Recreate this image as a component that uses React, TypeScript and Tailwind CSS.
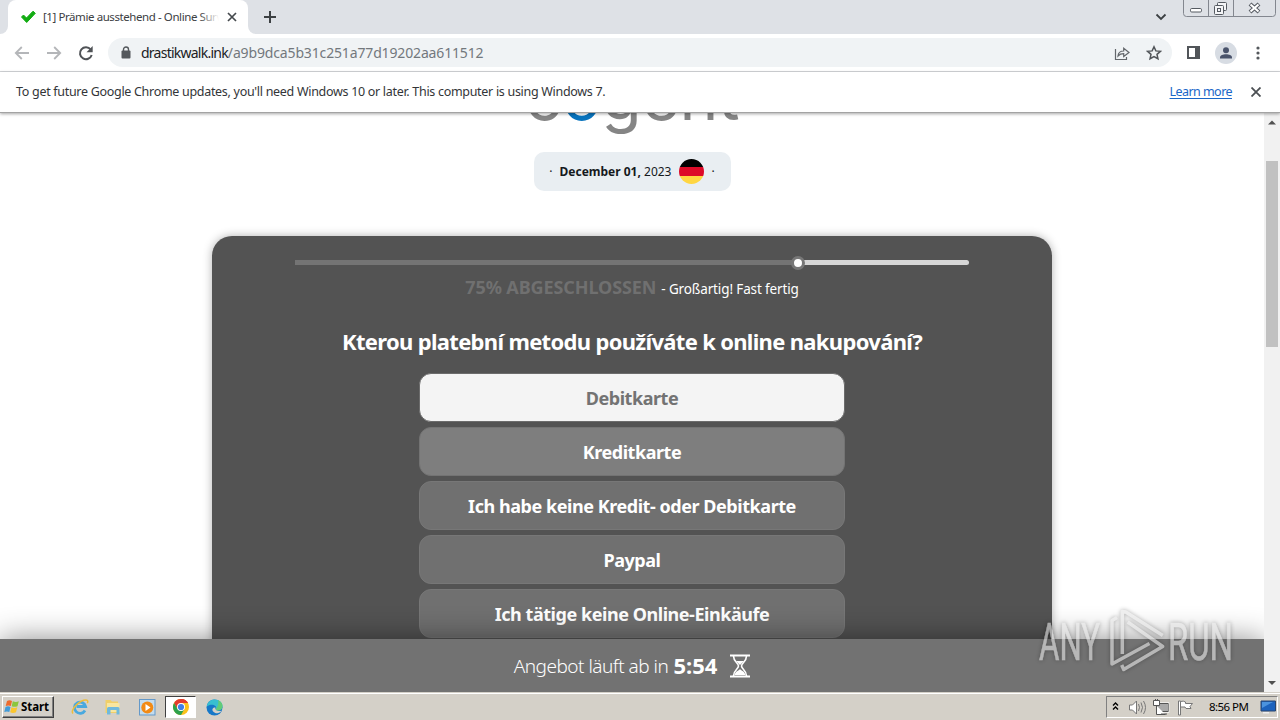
import clsx from 'clsx'

const OPTIONS = [
  { label: 'Debitkarte', state: 'active' },
  { label: 'Kreditkarte', state: 'hover' },
  { label: 'Ich habe keine Kredit- oder Debitkarte', state: 'idle' },
  { label: 'Paypal', state: 'idle' },
  { label: 'Ich tätige keine Online-Einkäufe', state: 'idle' },
]

const OPTION_STYLES = {
  active: 'bg-[#f4f4f4] text-[#737373] border-[#6c6c6c]',
  hover: 'bg-[#7e7e7e] text-white border-[#737373]',
  idle: 'bg-[#707070] text-white border-[#777777]',
}

function TabStrip() {
  return (
    <div className="flex h-[34px] shrink-0 justify-between bg-[#dee1e6]">
      <div className="flex">
        <div className="h-[34px] w-2 bg-white">
          <div className="h-full rounded-br-lg bg-[#dee1e6]" />
        </div>
        <div className="flex h-full w-[240px] items-center rounded-t-lg bg-white pl-[12px] pr-[9px]">
          <svg width="16" height="14" viewBox="0 0 16 14" className="shrink-0">
            <path d="M1.500 7l2-2 3 3L13 1.200l2.300 2.100L6.700 12.500z" fill="#12ac12" stroke="#12ac12" strokeLinejoin="round" />
          </svg>
          <div className="relative ml-[7px] w-[176px] overflow-hidden whitespace-nowrap text-[11.5px] tracking-[-0.42px] text-[#3c4043]">
            [1] Prämie ausstehend - Online Surv
            <div className="absolute inset-y-0 right-0 w-5 bg-gradient-to-r from-transparent to-white" />
          </div>
          <svg width="10" height="10" viewBox="0 0 10 10" className="ml-[8px] shrink-0" stroke="#45494d" strokeWidth="1.700">
            <path d="M1 1l8 8M9 1L1 9" />
          </svg>
        </div>
        <div className="h-[34px] w-2 bg-white">
          <div className="h-full rounded-bl-lg bg-[#dee1e6]" />
        </div>
        <svg width="14" height="34" viewBox="0 0 14 34" className="ml-[7px]" stroke="#3c4043" strokeWidth="2">
          <path d="M7 11v12M1 17h12" />
        </svg>
      </div>
      <div className="flex pr-[4px]">
        <svg width="12" height="34" viewBox="0 0 12 34" className="mr-[16px]" fill="none" stroke="#3c4043" strokeWidth="1.800">
          <path d="M1.500 14.500L6 19l4.500-4.500" />
        </svg>
        <svg width="93" height="18" viewBox="0 0 93 18" fill="none" stroke="#83878f">
          <path d="M.5 0v13.500q0 3 3 3h86q3 0 3-3V0M25.500 0v16M50.500 0v16" />
          <g stroke="#555a61">
            <rect x="7.500" y="8.500" width="11" height="3.500" rx="1.200" fill="#fff" />
            <rect x="34.500" y="2.500" width="9" height="8" rx="1" fill="#f4f5f7" />
            <rect x="31.500" y="5.500" width="9" height="9" rx="1" fill="#f4f5f7" />
            <rect x="34.500" y="8.500" width="3" height="3" />
          </g>
          <path d="M67 4l9 8M76 4l-9 8" stroke="#555a61" strokeWidth="4.200" />
          <path d="M67.500 4.500l8 7M75.500 4.500l-8 7" stroke="#fff" strokeWidth="2.200" />
        </svg>
      </div>
    </div>
  )
}

function Toolbar() {
  return (
    <div className="flex h-[38px] shrink-0 items-center border-b border-[#d5d7da] bg-white">
      <svg width="100" height="36" viewBox="0 0 100 36" fill="none" strokeWidth="1.800">
        <path d="M29 18H16M21.800 12l-6 6 6 6" stroke="#b4b6b9" />
        <path d="M47 18h13M54.200 12l6 6-6 6" stroke="#b4b6b9" />
        <path d="M90.700 14.500a6 6 0 1 0 1 5.500" stroke="#505357" strokeWidth="2" />
        <path d="M92.700 11v6.200h-6.200z" fill="#505357" />
      </svg>
      <div className="ml-2 flex h-[29px] w-[1064px] items-center rounded-full bg-[#f0f3f5] pl-[13px] pr-[10px]">
        <svg width="10" height="13" viewBox="0 0 10 13">
          <rect x=".5" y="4.500" width="9" height="8" rx="1" fill="#54585c" />
          <path d="M2.500 5V3.500a2.500 2.500 0 0 1 5 0V5" fill="none" stroke="#54585c" strokeWidth="1.400" />
        </svg>
        <div className="ml-[10px] flex-1 whitespace-nowrap text-[14px] tracking-[-0.15px] text-[#73787d]">
          <span className="tracking-[-0.76px] text-[#202124]">drastikwalk.ink</span>/a9b9dca5b31c251a77d19202aa611512
        </div>
        <svg width="16" height="16" viewBox="0 0 16 16" fill="none" stroke="#63676b" strokeWidth="1.200">
          <path d="M1.500 4v10.500h11V12" />
          <path d="M4 11c.3-3.500 2.300-5 5.700-5V3.200L15 7.500l-5.300 4V8.700C7.300 8.700 5.600 9.300 4 11z" />
        </svg>
        <svg width="16" height="16" viewBox="0 0 16 16" className="ml-4" fill="none" stroke="#515559" strokeWidth="1.500">
          <path d="M8 1.800l1.850 4.100 4.500.45-3.350 3 .95 4.400L8 11.500l-3.950 2.250.95-4.400-3.350-3 4.500-.45z" />
        </svg>
      </div>
      <svg width="15" height="15" viewBox="0 0 15 15" className="ml-[14px]" fill="none" stroke="#515559" strokeWidth="2">
        <path d="M2 2h11v11H2z" />
        <path d="M11 2v11" strokeWidth="4" />
      </svg>
      <svg width="22" height="22" viewBox="0 0 22 22" className="ml-[14px]">
        <circle cx="11" cy="11" r="11" fill="#d7dce3" />
        <circle cx="11" cy="8.300" r="3" fill="#49536b" />
        <path d="M5 16.500v-1.200c0-2 3-3.100 6-3.100s6 1.100 6 3.100v1.200z" fill="#49536b" />
      </svg>
      <svg width="4" height="14" viewBox="0 0 4 14" className="ml-[19px]" fill="#54585c">
        <circle cx="2" cy="2" r="1.600" />
        <circle cx="2" cy="7" r="1.600" />
        <circle cx="2" cy="12" r="1.600" />
      </svg>
    </div>
  )
}

function InfoBar() {
  return (
    <div className="relative z-10 flex h-[41px] shrink-0 items-center justify-between border-b border-[#a3a3a3] bg-white pl-4 pr-[19px] text-[12.5px] shadow-[0_1px_3px_rgba(0,0,0,0.35)]">
      <span className="whitespace-nowrap tracking-[-0.3px] text-[#333538]">
        To get future Google Chrome updates, you'll need Windows 10 or later. This computer is using Windows 7.
      </span>
      <div className="flex items-center">
        <span className="tracking-[-0.55px] text-[#1a66c8] underline underline-offset-2">Learn more</span>
        <svg width="10" height="10" viewBox="0 0 10 10" className="ml-[19px]" stroke="#4b4f53" strokeWidth="1.800">
          <path d="M.5.500l9 9M9.500.500l-9 9" />
        </svg>
      </div>
    </div>
  )
}

function GermanFlag() {
  return (
    <div className="flex h-[25px] w-[25px] flex-col overflow-hidden rounded-full">
      <div className="flex-1 bg-black" />
      <div className="flex-1 bg-[#dd0a28]" />
      <div className="flex-1 bg-[#ffd642]" />
    </div>
  )
}

function Survey() {
  return (
    <div className="mt-[45px] flex h-[500px] w-[840px] shrink-0 flex-col items-center rounded-[20px] bg-[#535353] pt-[24px] shadow-[0_0_10px_rgba(0,0,0,0.3)]">
      <div className="relative flex h-[5px] w-[674px] rounded-r-sm bg-[#d6d6d6]">
        <div className="h-full w-[504px] bg-[#747474]" />
        <div className="absolute -top-[4px] left-[496px] h-[14px] w-[14px] rounded-full border-[3px] border-[#777777] bg-white" />
      </div>
      <div className="mt-[9px] flex h-[28px] items-baseline gap-[5px] whitespace-nowrap">
        <span className="text-[18px] font-bold tracking-[-0.1px] text-[#707070]">75% ABGESCHLOSSEN</span>
        <span className="text-[13.500px] tracking-[-0.13px] text-white">- Großartig! Fast fertig</span>
      </div>
      <h1 className="mt-[23px] h-[32px] whitespace-nowrap text-[22px] font-bold leading-[32px] tracking-[-0.68px] text-white">
        Kterou platební metodu používáte k online nakupování?
      </h1>
      <div className="mt-[16px] flex w-[426px] flex-col gap-[5px]">
        {OPTIONS.map(option => (
          <button
            key={option.label}
            className={clsx(
              'flex h-[49px] items-center justify-center whitespace-nowrap rounded-[12px] border pt-[2px] text-[18px] font-bold tracking-[-0.45px]',
              OPTION_STYLES[option.state as keyof typeof OPTION_STYLES],
            )}
          >
            {option.label}
          </button>
        ))}
      </div>
    </div>
  )
}

function Scrollbar() {
  return (
    <div className="flex w-4 shrink-0 flex-col items-center bg-[#f1f1f1]">
      <svg width="16" height="48" viewBox="0 0 16 48" fill="#505050">
        <path d="M4 11.500h8L8 7.500z" />
      </svg>
      <div className="h-[186px] w-[12px] bg-[#c1c1c1]" />
      <div className="flex-1" />
      <svg width="16" height="17" viewBox="0 0 16 17" fill="#505050">
        <path d="M4 6h8l-4 4z" />
      </svg>
    </div>
  )
}

function Countdown() {
  return (
    <div className="relative z-10 flex h-[53px] shrink-0 items-center justify-center bg-[#727272] text-white shadow-[0_0_30px_rgba(0,0,0,0.45)]">
      <span className="whitespace-nowrap pt-px text-[19px] font-light tracking-[-0.5px]">Angebot läuft ab in</span>
      <span className="ml-[5px] text-[22px] font-bold">5:54</span>
      <svg width="20" height="24" viewBox="0 0 20 24" className="ml-[13px]" fill="none" stroke="#fff" strokeWidth="2">
        <path d="M0 1.500h20M0 22.500h20" />
        <path d="M3.500 2c0 6 5 7 5 10s-5 4-5 10M16.500 2c0 6-5 7-5 10s5 4 5 10" strokeWidth="1.600" />
        <path d="M6 7h8l-4 4zM4.500 21c1-4 4-4 5.500-6 1.500 2 4.500 2 5.500 6z" fill="#fff" stroke="none" />
      </svg>
    </div>
  )
}

function Watermark() {
  return (
    <svg width="200" height="74" viewBox="0 0 200 74" className="absolute left-[1035px] top-[604px] z-20 opacity-60 drop-shadow-[0_0_2px_rgba(0,0,0,0.5)]">
      <g fill="#e6e6e6" stroke="#e6e6e6" strokeWidth=".6" fontFamily="Roboto, sans-serif" fontSize="51">
        <text x="4" y="55.5" textLength="61" lengthAdjust="spacingAndGlyphs">ANY</text>
        <text x="133" y="55.5" textLength="65" lengthAdjust="spacingAndGlyphs">RUN</text>
      </g>
      <g fill="none" stroke="#e6e6e6" strokeWidth="3.500" strokeLinejoin="round">
        <path d="M82 13.500l-5 3v43.500l37.500-20.500" />
        <path d="M87.300 50V7.500l3.500.5 37 23.500" />
        <path d="M92.700 18l35 24.500-39 23-2-4.500" />
      </g>
    </svg>
  )
}

function StartIcon() {
  return (
    <svg width="16" height="16" viewBox="0 0 16 16">
      <path d="M3 2q2.500-1.500 5 0L6.800 7Q4.500 5.800 1.700 7z" fill="#ed6b2d" />
      <path d="M8.800 2.300q3 1.500 6 0L13.500 7.200q-3 1.300-5.800 0z" fill="#8cc63e" />
      <path d="M1.500 8q2.500-1.300 5 0l-1.200 5Q3 11.800.3 13z" fill="#429bd8" />
      <path d="M7.500 8.300q3 1.300 5.800 0L12 13.300q-3 1.300-5.800 0z" fill="#fbc62e" />
    </svg>
  )
}

function TaskbarIcons() {
  return (
    <div className="flex items-center">
      <svg width="18" height="18" viewBox="0 0 18 18" className="ml-[17px]" fill="none">
        <path d="M14 12.500a5.600 5.600 0 1 1 .6-4H5.500" stroke="#49a9df" strokeWidth="2.800" />
        <path d="M2 15.500C-1.500 12 9.500 1 16 2.200c1 .3 1 1.800.3 3" stroke="#edbd3c" strokeWidth="1.500" />
      </svg>
      <svg width="18" height="18" viewBox="0 0 18 18" className="ml-[15px]">
        <path d="M1.500 2h5l1.500 1.500h6V15h-12.500z" fill="#f0cf69" />
        <path d="M3 5h12.500v9H3z" fill="#f8e69f" />
        <path d="M3 16.500V10.500q0-1.500 1.500-1.500h9.500q1.500 0 1.500 1.500v6h-3V12h-6v4.500z" fill="#70b9dc" />
      </svg>
      <svg width="17" height="17" viewBox="0 0 17 17" className="ml-[17px]">
        <rect x=".5" y=".5" width="15.500" height="15.500" fill="#c4dced" stroke="#6499c9" />
        <circle cx="8.300" cy="8.500" r="6" fill="#f28a14" />
        <path d="M6.500 5l5 3.500-5 3.500z" fill="#fff" />
      </svg>
      <div className="ml-[9px] flex h-[22px] w-[31px] items-center justify-center border border-b-white border-l-[#404040] border-r-white border-t-[#404040] bg-white">
        <svg width="16" height="16" viewBox="0 0 16 16">
          <circle cx="8" cy="8" r="8" fill="#fbc11b" />
          <path d="M8 8V0a8 8 0 0 1 6.930 4H8z" fill="#e33b2e" />
          <path d="M8 4L4.540 10 1.070 4A8 8 0 0 1 14.930 4z" fill="#e33b2e" />
          <path d="M1.070 4A8 8 0 0 0 8 16l3.460-6-6.920 0z" fill="#2da14c" />
          <circle cx="8" cy="8" r="4" fill="#fff" />
          <circle cx="8" cy="8" r="3.100" fill="#3f7fe8" />
        </svg>
      </div>
      <svg width="17" height="17" viewBox="0 0 17 17" className="ml-[10px]">
        <circle cx="8.500" cy="8.500" r="8" fill="#1678c8" />
        <path d="M.7 7.500C1.500 3 4.800.5 8.700.5c4.500 0 7.800 3 7.800 6.500 0 3-2.200 4.500-4.500 4.500-2 0-2.700-.7-2-1.700 1.500-3-4.500-6-9.300-2.300z" fill="#38bfd0" />
        <path d="M12 1.200c3 1.200 4.500 3.500 4.500 5.800 0 3-2.200 4.500-4.500 4.500-2 0-2.700-.7-2-1.700C12 7 13 4 12 1.200z" fill="#62cb78" />
        <path d="M9.500 8.500c-.8 2.500 2.500 4.500 6.200 3-2 3.300-5.700 3.500-8 1.500-2.500-2.200-1-5 1.800-4.500z" fill="#d4d0c8" />
      </svg>
    </div>
  )
}

function Taskbar() {
  return (
    <div className="flex h-[28px] shrink-0 items-center justify-between border-t border-[#d4d0c8] bg-[#d4d0c8] shadow-[inset_0_1px_0_#ffffff]">
      <div className="flex h-full items-center pt-px">
        <div className="ml-[2px] flex h-[22px] w-[52px] items-center border border-b-[#404040] border-l-white border-r-[#404040] border-t-white pl-px shadow-[inset_-1px_-1px_0_#808080]">
          <StartIcon />
          <span className="ml-px text-[11.500px] font-bold tracking-[-0.1px] text-black">Start</span>
        </div>
        <TaskbarIcons />
      </div>
      <div className="mr-[2px] mt-px flex h-[22px] w-[172px] items-center border border-b-white border-l-[#808080] border-r-white border-t-[#808080]">
        <svg width="95" height="20" viewBox="0 0 95 20" fill="none">
          <path d="M6 8.500l2.500-2.500L11 8.500M6 12.500L8.500 10l2.500 2.500" stroke="#000" strokeWidth="1.400" />
          <path d="M22.500 8h3l4-4v13l-4-4h-3z" fill="#fff" stroke="#777" />
          <path d="M31.500 7q2 3.500 0 7M34 5.500q3 5 0 10M36.500 4q4 6.500 0 13" stroke="#777" />
          <path d="M50.500 6.500h11v8h-11z" fill="#a9a9a9" stroke="#555" />
          <path d="M50 5.500h12v10H50z" stroke="#fff" strokeWidth=".6" />
          <path d="M46.500 3.500h6v5h-6zM48.500 2v2M50.500 2v2M49.500 8.500v9h9M54 17h6" stroke="#555" fill="#fff" />
          <path d="M71.500 4v14h2V4z" fill="#fff" stroke="#777" />
          <path d="M73.500 4.500q3-1 5 .5v1.500h7l-2.500 3 1 2h-5l-1-1.500h-4.500z" fill="#fff" stroke="#777" />
        </svg>
        <span className="ml-[7px] w-[40px] whitespace-nowrap text-[11.500px] tracking-[-0.55px] text-black">8:56 PM</span>
        <svg width="17" height="14" viewBox="0 0 17 14" className="ml-[11px]">
          <path d="M1 1h14.500v10H1z" fill="#1c62bd" stroke="#29456e" />
          <path d="M2 2h11L2 8z" fill="#4b93df" />
          <path d="M3 12h6v1.500H3z" fill="#eee" />
        </svg>
      </div>
    </div>
  )
}

export default function App() {
  return (
    <div className="relative flex h-[720px] w-[1280px] flex-col overflow-hidden bg-white font-['Noto_Sans',sans-serif]">
      <TabStrip />
      <Toolbar />
      <InfoBar />
      <div className="flex min-h-0 flex-1">
        <div className="flex min-w-0 flex-1 flex-col overflow-hidden">
          <main className="flex min-h-0 flex-1 flex-col items-center overflow-hidden">
            <div className="-mt-[58px] h-[97px] shrink-0 whitespace-nowrap font-['Inter'] text-[66px] leading-[82px] tracking-[-0.4px] text-[#858585]">
              c<span className="text-[#0873bd]">o</span>gent
            </div>
            <div className="flex h-[39px] w-[197px] shrink-0 items-center justify-center rounded-[10px] bg-[#e9eef2] text-[12px] text-[#15191d]">
              <span>·</span>
              <span className="ml-[7px] mr-[8px] whitespace-nowrap">
                <b>December 01,</b> 2023
              </span>
              <GermanFlag />
              <span className="ml-[7px]">·</span>
            </div>
            <Survey />
          </main>
          <Countdown />
        </div>
        <Scrollbar />
      </div>
      <Taskbar />
      <Watermark />
    </div>
  )
}
